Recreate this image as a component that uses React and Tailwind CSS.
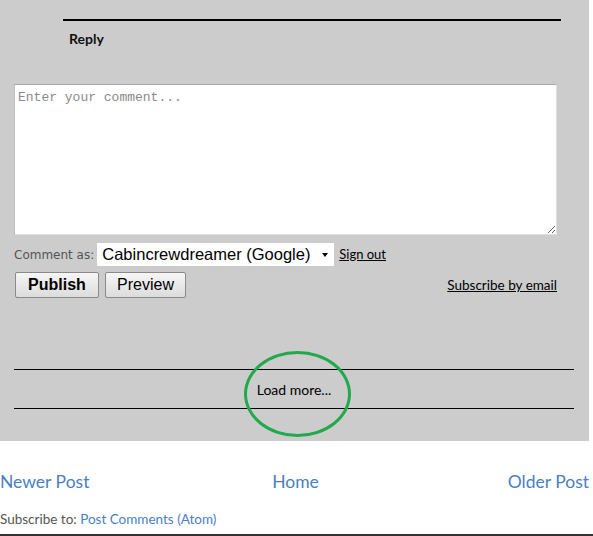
export default function App() {
  return (
    <div className="relative h-[536px] w-[593px] overflow-hidden bg-white font-['Lato',sans-serif]">
      {/* comment area */}
      <div className="relative h-[441px] w-[589px] bg-[#cccccc]">
        <div className="pt-[19px] pl-[63px]">
          <div className="h-[2px] w-[498px] bg-black" />
          <div className="mt-[10px] pl-[6px] text-[14px] font-bold leading-[16px] text-[#111]">Reply</div>
        </div>

        <div className="mt-[37px] ml-[14px] w-[543px]">
          <textarea
            readOnly
            placeholder="Enter your comment..."
            className="block h-[151px] w-full resize border border-t-[#a8a8a8] border-l-[#bdbdbd] border-r-[#e0e0e0] border-b-[#e0e0e0] bg-white px-[3px] pt-[5px] pb-[2px] font-['Liberation_Mono',monospace] text-[13px] leading-[16px] text-[#333] outline-none placeholder:text-[#8a8a8a]"
          />

          <div className="mt-[8px] flex items-center">
            <span className="font-['DejaVu_Sans',sans-serif] text-[12px] text-[#555]">Comment as:</span>
            <div className="ml-[3px] flex h-[23px] w-[237px] items-center justify-between bg-white pl-[5px] pr-[6px] font-['Liberation_Sans',sans-serif] text-[16.5px] text-black">
              <span>Cabincrewdreamer (Google)</span>
              <span className="h-0 w-0 border-x-[3px] border-t-[4px] border-x-transparent border-t-black" />
            </div>
            <a className="ml-[5px] text-[13px] text-black underline">Sign out</a>
          </div>

          <div className="mt-[6px] flex items-center">
            <button className="ml-[1px] h-[26px] w-[84px] rounded-[2px] border border-[#8a8a8a] bg-gradient-to-b from-[#f6f6f6] to-[#dcdcdc] font-['Liberation_Sans',sans-serif] text-[16px] font-bold text-black">
              Publish
            </button>
            <button className="ml-[6px] h-[26px] w-[81px] rounded-[2px] border border-[#8a8a8a] bg-gradient-to-b from-[#f6f6f6] to-[#dcdcdc] font-['Liberation_Sans',sans-serif] text-[16px] text-black">
              Preview
            </button>
            <a className="ml-auto text-[13.5px] text-black underline">Subscribe by email</a>
          </div>
        </div>

        {/* load more strip */}
        <div className="mt-[71px] ml-[14px] w-[560px] border-y border-black">
          <div className="flex h-[38px] items-center justify-center text-[14px] text-black">
            <span>Load more...</span>
          </div>
        </div>

        <div className="absolute left-[244px] top-[351px] h-[86px] w-[107px] rounded-[50%] border-[3px] border-[#22a94b]" />
      </div>

      {/* post navigation */}
      <div className="mt-[30px] flex items-center justify-between pr-[4px] text-[17.5px] leading-[22px] text-[#4a80c4]">
        <a>Newer Post</a>
        <a className="mr-[6px]">Home</a>
        <a>Older Post</a>
      </div>
      <div className="mt-[18px] text-[13.5px] leading-[16px] text-[#555]">
        Subscribe to: <a className="text-[#4a80c4]">Post Comments (Atom)</a>
      </div>
      <div className="absolute bottom-0 left-0 h-[2px] w-full bg-[#333]" />
    </div>
  );
}
